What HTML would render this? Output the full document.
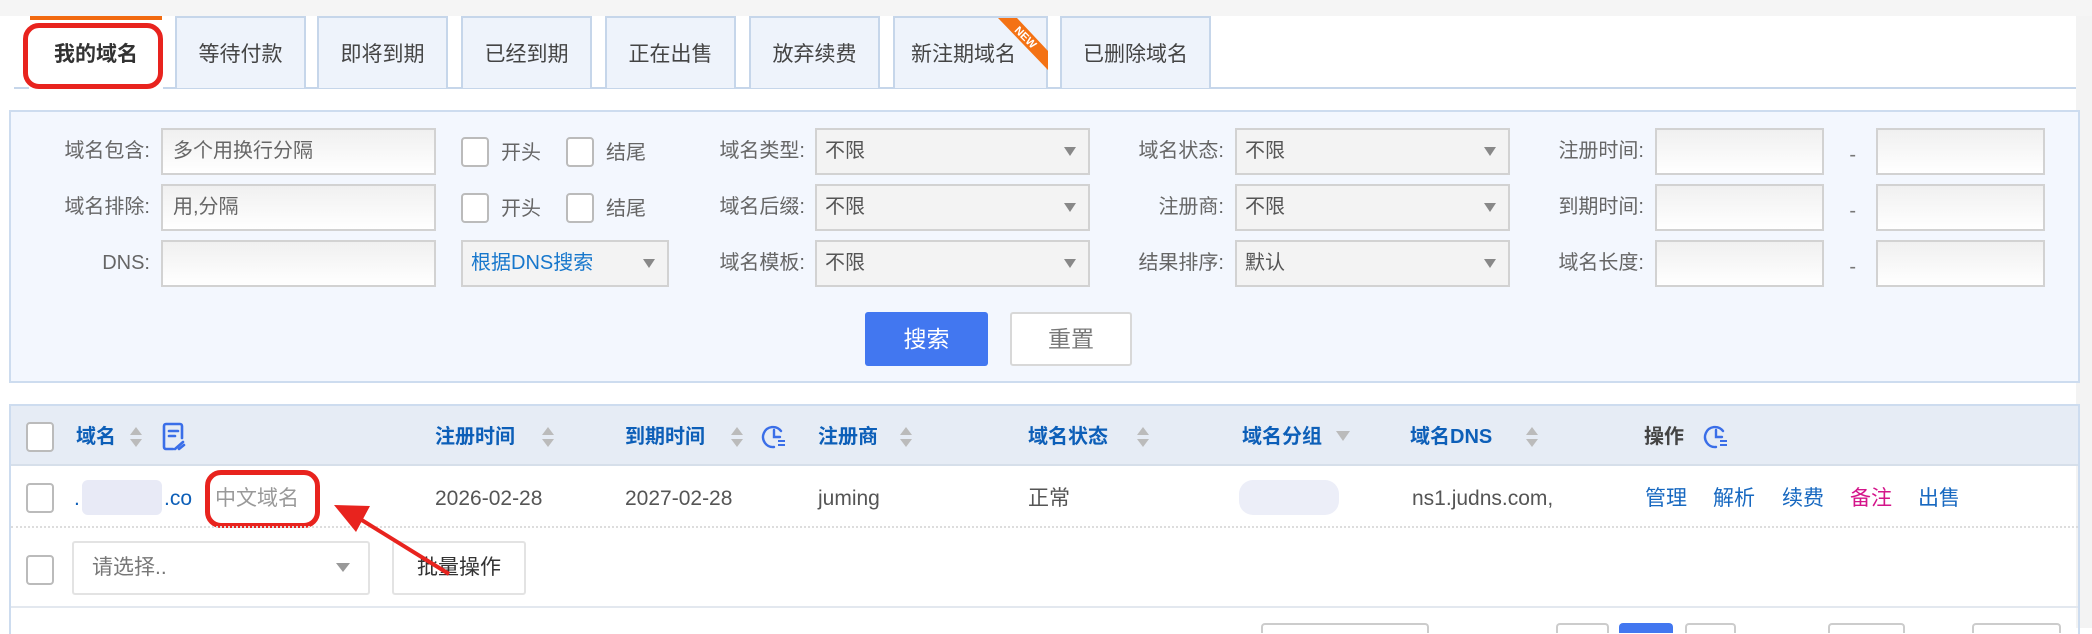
<!DOCTYPE html>
<html><head><meta charset="utf-8"><style>
*{box-sizing:border-box;margin:0;padding:0}
body{width:2092px;height:628px;overflow:hidden;background:#fff;font-family:"Liberation Sans","Noto Sans CJK SC",sans-serif;color:#555;position:relative}
.a{position:absolute}
.tab{position:absolute;top:16px;height:72px;background:#eef3fb;border:2px solid #c6d6ea;border-bottom:none;font-size:21px;color:#444;display:flex;align-items:center;justify-content:center}
.lbl{position:absolute;font-size:20px;color:#666;text-align:right;line-height:47px}
.inp{position:absolute;height:47px;border:2px solid #d2d2d2;background:linear-gradient(#f0f0f0,#fff);font-size:20px;color:#666;line-height:43px;padding-left:10px}
.sel{position:absolute;height:47px;border:2px solid #d2d2d2;background:#f3f3f3;font-size:20px;color:#555;line-height:43px;padding-left:8px}
.sel:after{content:"";position:absolute;right:12px;top:17px;border-left:6px solid transparent;border-right:6px solid transparent;border-top:9px solid #888}
.cb{position:absolute;width:28px;height:30px;border:2px solid #bbb;border-radius:4px;background:#fff}
.ct{position:absolute;font-size:20px;color:#666;line-height:30px}
.th{position:absolute;top:422px;font-size:20px;font-weight:bold;color:#0d5fb8;line-height:30px}
.td{position:absolute;top:484px;font-size:21px;color:#555;line-height:30px}
.srt{position:absolute;width:12px;height:22px}
.srt:before{content:"";position:absolute;left:0;top:0;border-left:6px solid transparent;border-right:6px solid transparent;border-bottom:8px solid #bbb}
.srt:after{content:"";position:absolute;left:0;top:12px;border-left:6px solid transparent;border-right:6px solid transparent;border-top:8px solid #bbb}
.pg{position:absolute;top:623px;height:10px;border:2px solid #ccc;border-bottom:none;border-radius:4px 4px 0 0}
</style></head><body>
<div class="a" style="left:0;top:0;width:2092px;height:16px;background:#f5f5f5"></div>
<div class="a" style="left:14px;top:87px;width:2062px;height:2px;background:#c6d6ea"></div>
<div class="a" style="left:2076px;top:16px;width:16px;height:612px;background:#f3f3f3"></div>
<!-- tabs -->
<div class="tab" style="left:29px;width:134px;background:#fff;border:none;font-weight:bold;height:74px;color:#333">我的域名</div>
<div class="a" style="left:30px;top:16px;width:132px;height:4px;background:#f26a10"></div>
<div class="a" style="left:23px;top:23px;width:140px;height:66px;border:5px solid #e8231e;border-radius:16px"></div>
<div class="tab" style="left:175px;width:131px">等待付款</div>
<div class="tab" style="left:317px;width:131px">即将到期</div>
<div class="tab" style="left:461px;width:131px">已经到期</div>
<div class="tab" style="left:605px;width:131px">正在出售</div>
<div class="tab" style="left:749px;width:131px">放弃续费</div>
<div class="tab" style="left:893px;width:155px;justify-content:flex-start;padding-left:16px">新注期域名
<svg class="a" style="left:0;top:0" width="153" height="72"><polygon points="103,0 122,0 153,33 153,52" fill="#f47214"/><text x="128" y="22" transform="rotate(45 128 22)" font-size="11" font-weight="bold" fill="#fff" text-anchor="middle" font-family="Liberation Sans">NEW</text></svg></div>
<div class="tab" style="left:1060px;width:151px">已删除域名</div>
<!-- filter panel -->
<div class="a" style="left:9px;top:110px;width:2071px;height:273px;background:#f3f7fe;border:2px solid #cddcef"></div>
<div class="lbl" style="left:20px;top:128px;width:130px">域名包含:</div>
<div class="lbl" style="left:20px;top:184px;width:130px">域名排除:</div>
<div class="lbl" style="left:20px;top:240px;width:130px">DNS:</div>
<div class="inp" style="left:161px;top:128px;width:275px">多个用换行分隔</div>
<div class="inp" style="left:161px;top:184px;width:275px">用,分隔</div>
<div class="inp" style="left:161px;top:240px;width:275px"></div>
<div class="cb" style="left:461px;top:137px"></div><div class="ct" style="left:501px;top:138px">开头</div>
<div class="cb" style="left:566px;top:137px"></div><div class="ct" style="left:606px;top:138px">结尾</div>
<div class="cb" style="left:461px;top:193px"></div><div class="ct" style="left:501px;top:194px">开头</div>
<div class="cb" style="left:566px;top:193px"></div><div class="ct" style="left:606px;top:194px">结尾</div>
<div class="sel" style="left:461px;top:240px;width:208px;color:#1777cc">根据DNS搜索</div>
<div class="lbl" style="left:680px;top:128px;width:125px">域名类型:</div>
<div class="lbl" style="left:680px;top:184px;width:125px">域名后缀:</div>
<div class="lbl" style="left:680px;top:240px;width:125px">域名模板:</div>
<div class="sel" style="left:815px;top:128px;width:275px">不限</div>
<div class="sel" style="left:815px;top:184px;width:275px">不限</div>
<div class="sel" style="left:815px;top:240px;width:275px">不限</div>
<div class="lbl" style="left:1100px;top:128px;width:124px">域名状态:</div>
<div class="lbl" style="left:1100px;top:184px;width:124px">注册商:</div>
<div class="lbl" style="left:1100px;top:240px;width:124px">结果排序:</div>
<div class="sel" style="left:1235px;top:128px;width:275px">不限</div>
<div class="sel" style="left:1235px;top:184px;width:275px">不限</div>
<div class="sel" style="left:1235px;top:240px;width:275px">默认</div>
<div class="lbl" style="left:1520px;top:128px;width:124px">注册时间:</div>
<div class="lbl" style="left:1520px;top:184px;width:124px">到期时间:</div>
<div class="lbl" style="left:1520px;top:240px;width:124px">域名长度:</div>
<div class="inp" style="left:1655px;top:128px;width:169px"></div>
<div class="inp" style="left:1655px;top:184px;width:169px"></div>
<div class="inp" style="left:1655px;top:240px;width:169px"></div>
<div class="lbl" style="left:1844px;top:132px;width:12px;color:#777">-</div>
<div class="lbl" style="left:1844px;top:188px;width:12px;color:#777">-</div>
<div class="lbl" style="left:1844px;top:244px;width:12px;color:#777">-</div>
<div class="inp" style="left:1876px;top:128px;width:169px"></div>
<div class="inp" style="left:1876px;top:184px;width:169px"></div>
<div class="inp" style="left:1876px;top:240px;width:169px"></div>
<div class="a" style="left:865px;top:312px;width:123px;height:54px;background:#4277f0;border-radius:3px;color:#fff;font-size:23px;line-height:54px;text-align:center">搜索</div>
<div class="a" style="left:1010px;top:312px;width:122px;height:54px;background:#fff;border:2px solid #d8d8d8;border-radius:3px;color:#777;font-size:23px;line-height:50px;text-align:center">重置</div>
<!-- table -->
<div class="a" style="left:9px;top:404px;width:2071px;height:230px;border:2px solid #cddcef;border-bottom:none"></div>
<div class="a" style="left:11px;top:406px;width:2067px;height:60px;background:#e6ecf5;border-bottom:2px solid #d6dfea"></div>
<div class="cb" style="left:26px;top:422px"></div>
<div class="th" style="left:76px">域名</div><div class="srt" style="left:130px;top:427px"></div>
<svg class="a" style="left:161px;top:422px" width="26" height="30" viewBox="0 0 26 30"><path d="M12 27H5a2 2 0 0 1-2-2V4a2 2 0 0 1 2-2h14a2 2 0 0 1 2 2v12M8 9h9M8 14h6" fill="none" stroke="#3a6ee8" stroke-width="2.6" stroke-linecap="round"/><path d="M14 27l8-7M18 27l5-4" stroke="#3a6ee8" stroke-width="2.6" stroke-linecap="round"/></svg>
<div class="th" style="left:435px">注册时间</div><div class="srt" style="left:542px;top:427px"></div>
<div class="th" style="left:625px">到期时间</div><div class="srt" style="left:731px;top:427px"></div>
<svg class="a" style="left:761px;top:424px" width="26" height="26" viewBox="0 0 26 26"><path d="M20 7A10 10 0 1 0 13 23M13 6v7h6" fill="none" stroke="#3a6ee8" stroke-width="2.4" stroke-linecap="round"/><path d="M17 17h7M17 21h7" stroke="#3a6ee8" stroke-width="2"/></svg>
<div class="th" style="left:818px">注册商</div><div class="srt" style="left:900px;top:427px"></div>
<div class="th" style="left:1028px">域名状态</div><div class="srt" style="left:1137px;top:427px"></div>
<div class="th" style="left:1242px">域名分组</div><div class="a" style="left:1336px;top:431px;border-left:7px solid transparent;border-right:7px solid transparent;border-top:10px solid #bbb"></div>
<div class="th" style="left:1410px">域名DNS</div><div class="srt" style="left:1526px;top:427px"></div>
<div class="th" style="left:1644px;color:#444">操作</div>
<svg class="a" style="left:1703px;top:424px" width="26" height="26" viewBox="0 0 26 26"><path d="M20 7A10 10 0 1 0 13 23M13 6v7h6" fill="none" stroke="#3a6ee8" stroke-width="2.4" stroke-linecap="round"/><path d="M17 17h7M17 21h7" stroke="#3a6ee8" stroke-width="2"/></svg>
<!-- row -->
<div class="cb" style="left:26px;top:483px"></div>
<div class="td" style="left:74px;color:#0d5fb8">.</div>
<div class="a" style="left:82px;top:480px;width:80px;height:35px;background:#e8eaf6;border-radius:6px"></div>
<div class="td" style="left:164px;color:#0d5fb8">.co</div>
<div class="td" style="left:215px;color:#999">中文域名</div>
<div class="a" style="left:205px;top:470px;width:115px;height:58px;border:5px solid #e8231e;border-radius:16px"></div>
<div class="td" style="left:435px">2026-02-28</div>
<div class="td" style="left:625px">2027-02-28</div>
<div class="td" style="left:818px">juming</div>
<div class="td" style="left:1028px">正常</div>
<div class="a" style="left:1239px;top:480px;width:100px;height:35px;background:#eceef8;border-radius:14px"></div>
<div class="td" style="left:1412px">ns1.judns.com,</div>
<div class="td" style="left:1645px;color:#1768c0">管理</div>
<div class="td" style="left:1713px;color:#1768c0">解析</div>
<div class="td" style="left:1782px;color:#1768c0">续费</div>
<div class="td" style="left:1850px;color:#d4148a">备注</div>
<div class="td" style="left:1918px;color:#1768c0">出售</div>
<div class="a" style="left:11px;top:526px;width:2067px;height:0;border-top:2px dotted #ddd"></div>
<!-- bulk -->
<div class="cb" style="left:26px;top:555px"></div>
<div class="a" style="left:72px;top:541px;width:298px;height:54px;border:2px solid #e3e3e3;border-radius:3px;font-size:21px;color:#777;line-height:50px;padding-left:18px">请选择..</div>
<div class="a" style="left:336px;top:563px;border-left:7px solid transparent;border-right:7px solid transparent;border-top:9px solid #999"></div>
<div class="a" style="left:392px;top:541px;width:134px;height:54px;border:2px solid #e3e3e3;border-radius:3px;font-size:21px;color:#333;line-height:50px;text-align:center">批量操作</div>
<div class="a" style="left:11px;top:606px;width:2067px;height:2px;background:#e3e8ef"></div>
<svg class="a" style="left:0;top:0" width="2092" height="628"><line x1="449" y1="574" x2="352" y2="514" stroke="#e8231e" stroke-width="4"/><polygon points="334,505 370,506 356,532" fill="#e8231e"/></svg>
<div class="pg" style="left:1261px;width:168px"></div>
<div class="pg" style="left:1556px;width:53px"></div>
<div class="pg" style="left:1619px;width:54px;background:#4277f0;border-color:#4277f0"></div>
<div class="pg" style="left:1685px;width:51px"></div>
<div class="pg" style="left:1828px;width:77px"></div>
<div class="pg" style="left:1972px;width:89px"></div>
</body></html>
